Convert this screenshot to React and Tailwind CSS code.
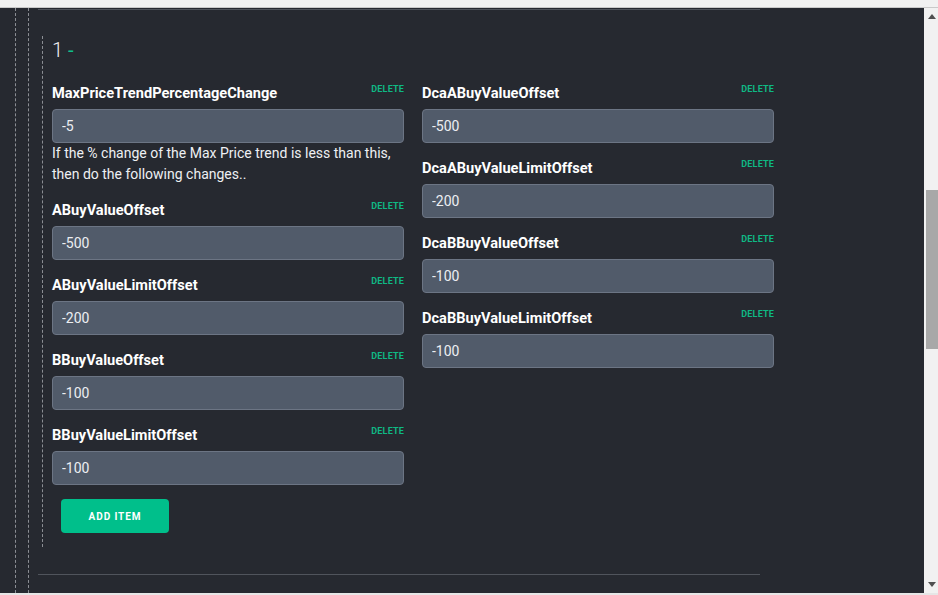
import React from "react";

const leftFields = [
  { name: "ABuyValueOffset", value: "-500" },
  { name: "ABuyValueLimitOffset", value: "-200" },
  { name: "BBuyValueOffset", value: "-100" },
  { name: "BBuyValueLimitOffset", value: "-100" },
];

const rightFields = [
  { name: "DcaABuyValueOffset", value: "-500" },
  { name: "DcaABuyValueLimitOffset", value: "-200" },
  { name: "DcaBBuyValueOffset", value: "-100" },
  { name: "DcaBBuyValueLimitOffset", value: "-100" },
];

function Field({ name, value, children }) {
  return (
    <div className="flex flex-col">
      <div className="flex items-start justify-between h-[21px] mb-[6px] pt-px">
        <span className="text-[14.6px] font-bold text-white leading-5">{name}</span>
        <button className="text-[9px] font-bold leading-3 text-[#0fb884] tracking-[0.02em]">
          DELETE
        </button>
      </div>
      <input
        defaultValue={value}
        className="h-[34px] w-full rounded-[4px] border border-[#6c7584] bg-[#515b6a] px-[9px] text-sm text-[#eceef2] outline-none"
      />
      {children}
    </div>
  );
}

export default function App() {
  return (
    <div className="w-[938px] h-[595px] overflow-hidden bg-[#262930] font-['Roboto',sans-serif] flex flex-col">
      <div className="h-[8px] bg-[#f1f1f1] border-b border-[#c9c9c9] shrink-0" />
      <div className="flex flex-1 min-h-0">
        {/* page content */}
        <div className="flex-1 flex">
          <div className="ml-[15px] border-l border-dashed border-[#8b8e94] pl-[12px] flex">
            <div className="border-l border-dashed border-[#8b8e94] pl-[9px]">
              <div className="mt-px w-[722px] border-t border-b border-[#50545c] pt-[27px] pb-[27px]">
                <div className="ml-[4px] border-l border-dashed border-[#8b8e94] pl-[9px] pb-[14px]">
                  <div className="text-xl font-light leading-7 text-[#f2f2f2] -mt-px">
                    1 <span className="text-[#0fbf8a] font-normal">-</span>
                  </div>
                  <div className="mt-[18px] grid grid-cols-[352px_352px] gap-x-[18px] items-start">
                    <div className="flex flex-col gap-[14px]">
                      <Field name="MaxPriceTrendPercentageChange" value="-5">
                        <p className="text-sm leading-[21px] text-[#eef0f3]">
                          If the % change of the Max Price trend is less than this, then do the following changes..
                        </p>
                      </Field>
                      {leftFields.map((f) => (
                        <Field key={f.name} name={f.name} value={f.value} />
                      ))}
                    </div>
                    <div className="flex flex-col gap-[14px]">
                      {rightFields.map((f) => (
                        <Field key={f.name} name={f.name} value={f.value} />
                      ))}
                    </div>
                  </div>
                  <button className="mt-[14px] ml-[9px] h-[34px] w-[108px] rounded-[4px] bg-[#00bf8b] text-[10px] font-bold tracking-[0.09em] text-white">
                    ADD ITEM
                  </button>
                </div>
              </div>
            </div>
          </div>
        </div>
        {/* scrollbar */}
        <div className="w-[14px] shrink-0 bg-[#f1f1f1] flex flex-col items-end">
          <div className="h-[17px] w-[12px] flex items-center justify-center">
            <svg width="8" height="5" viewBox="0 0 8 5">
              <path d="M0 5 L4 0 L8 5 Z" fill="#505050" />
            </svg>
          </div>
          <div className="mt-[165px] h-[159px] w-[12px] bg-[#a8a8a8]" />
          <div className="flex-1" />
          <div className="h-[17px] w-[12px] flex items-center justify-center">
            <svg width="8" height="5" viewBox="0 0 8 5">
              <path d="M0 0 L4 5 L8 0 Z" fill="#505050" />
            </svg>
          </div>
        </div>
      </div>
      <div className="h-[2px] bg-[#e6e6e6] shrink-0" />
    </div>
  );
}
